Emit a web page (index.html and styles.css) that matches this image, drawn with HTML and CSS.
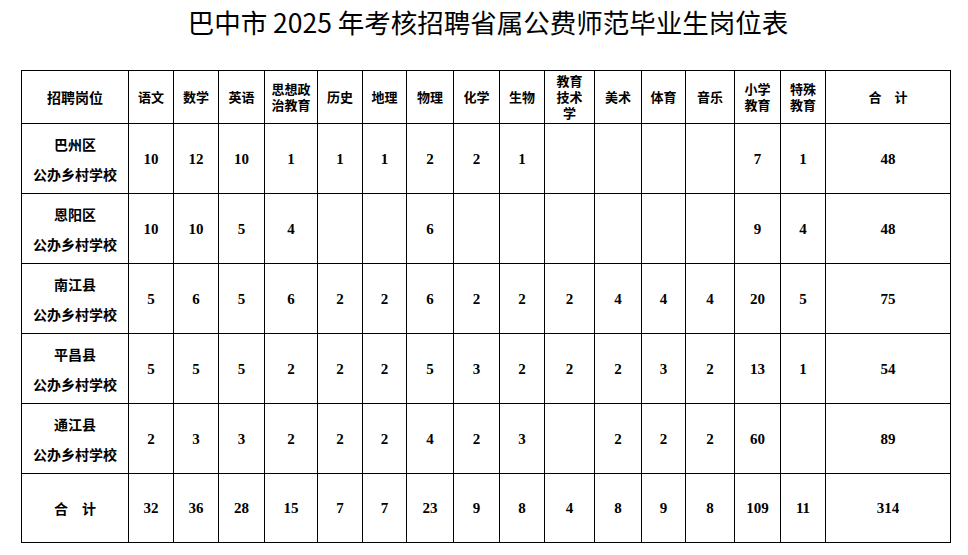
FILE: index.html
```html
<!DOCTYPE html>
<html lang="zh-CN">
<head>
<meta charset="utf-8">
<title>巴中市 2025 年考核招聘省属公费师范毕业生岗位表</title>
<link rel="stylesheet" href="styles.css">
</head>
<body>
<h1 class="title">巴中市 2025 年考核招聘省属公费师范毕业生岗位表</h1>
<table class="grid">
  <colgroup>
    <col class="c107"><col class="c45"><col class="c45"><col class="c46"><col class="c53"><col class="c45"><col class="c44"><col class="c47"><col class="c46"><col class="c45"><col class="c50"><col class="c47"><col class="c44"><col class="c49"><col class="c46"><col class="c45"><col class="c125">
  </colgroup>
  <thead>
    <tr class="head">
      <th class="first">招聘岗位</th>
      <th>语文</th><th>数学</th><th>英语</th><th>思想政<br>治教育</th><th>历史</th><th>地理</th><th>物理</th><th>化学</th><th>生物</th><th>教育<br>技术<br>学</th><th>美术</th><th>体育</th><th>音乐</th><th>小学<br>教育</th><th>特殊<br>教育</th><th>合　计</th>
    </tr>
  </thead>
  <tbody>
    <tr class="row">
      <td class="label">巴州区<br>公办乡村学校</td>
      <td>10</td><td>12</td><td>10</td><td>1</td><td>1</td><td>1</td><td>2</td><td>2</td><td>1</td><td></td><td></td><td></td><td></td><td>7</td><td>1</td><td>48</td>
    </tr>
    <tr class="row">
      <td class="label">恩阳区<br>公办乡村学校</td>
      <td>10</td><td>10</td><td>5</td><td>4</td><td></td><td></td><td>6</td><td></td><td></td><td></td><td></td><td></td><td></td><td>9</td><td>4</td><td>48</td>
    </tr>
    <tr class="row">
      <td class="label">南江县<br>公办乡村学校</td>
      <td>5</td><td>6</td><td>5</td><td>6</td><td>2</td><td>2</td><td>6</td><td>2</td><td>2</td><td>2</td><td>4</td><td>4</td><td>4</td><td>20</td><td>5</td><td>75</td>
    </tr>
    <tr class="row">
      <td class="label">平昌县<br>公办乡村学校</td>
      <td>5</td><td>5</td><td>5</td><td>2</td><td>2</td><td>2</td><td>5</td><td>3</td><td>2</td><td>2</td><td>2</td><td>3</td><td>2</td><td>13</td><td>1</td><td>54</td>
    </tr>
    <tr class="row">
      <td class="label">通江县<br>公办乡村学校</td>
      <td>2</td><td>3</td><td>3</td><td>2</td><td>2</td><td>2</td><td>4</td><td>2</td><td>3</td><td></td><td>2</td><td>2</td><td>2</td><td>60</td><td></td><td>89</td>
    </tr>
    <tr class="row last">
      <td class="label">合　计</td>
      <td>32</td><td>36</td><td>28</td><td>15</td><td>7</td><td>7</td><td>23</td><td>9</td><td>8</td><td>4</td><td>8</td><td>9</td><td>8</td><td>109</td><td>11</td><td>314</td>
    </tr>
  </tbody>
</table>
</body>
</html>
```
FILE: styles.css
```css
html, body {
  margin: 0;
  padding: 0;
  background: #fff;
  color: #000;
}

body {
  width: 968px;
  height: 555px;
  overflow: hidden;
}

.title {
  margin: 0;
  padding: 7px 0 0 8px;
  height: 70px;
  box-sizing: border-box;
  text-align: center;
  font-family: "Noto Sans CJK SC", "Noto Sans", sans-serif;
  font-weight: 400;
  font-size: 26.5px;
  line-height: 30px;
}

.grid {
  margin-left: 21px;
  border-collapse: collapse;
  table-layout: fixed;
  width: 930px;
}

.grid th,
.grid td {
  border: 1px solid #000;
  padding: 0;
  text-align: center;
  vertical-align: middle;
}

.grid th {
  font-family: "Noto Sans CJK SC", sans-serif;
  font-weight: 700;
  font-size: 13px;
  line-height: 16px;
}

.grid th.first {
  font-size: 14px;
}

.grid td {
  font-family: "Liberation Serif", "Times New Roman", serif;
  font-weight: 700;
  font-size: 15px;
  line-height: 18px;
}

.grid td.label {
  font-family: "Noto Sans CJK SC", sans-serif;
  font-weight: 700;
  font-size: 14px;
  line-height: 30px;
}

.head { height: 53px; }
.row { height: 70px; }
.row.last { height: 69px; }

.c107 { width: 107px; }
.c44 { width: 44px; }
.c45 { width: 45px; }
.c46 { width: 46px; }
.c47 { width: 47px; }
.c49 { width: 49px; }
.c50 { width: 50px; }
.c53 { width: 53px; }
.c125 { width: 125px; }
```
